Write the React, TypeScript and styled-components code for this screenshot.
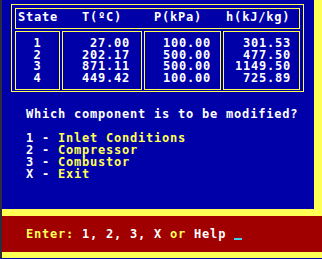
import React, { FunctionComponent } from "react";
import styled, { createGlobalStyle } from "styled-components";

const BLUE = "#0000a8";
const YELLOW = "#ffff55";
const WHITE = "#ffffff";
const RED = "#a00000";

type Row = {
  state: string;
  t: string;
  p: string;
  h: string;
};

const rows: Row[] = [
  { state: "1", t: "27.00", p: "100.00", h: "301.53" },
  { state: "2", t: "202.17", p: "500.00", h: "477.50" },
  { state: "3", t: "871.11", p: "500.00", h: "1149.50" },
  { state: "4", t: "449.42", p: "100.00", h: "725.89" },
];

const menu = [
  { key: "1", label: "Inlet Conditions" },
  { key: "2", label: "Compressor" },
  { key: "3", label: "Combustor" },
  { key: "X", label: "Exit" },
];

const App: FunctionComponent = () => {
  return (
    <>
      <GlobalStyle />
      <Screen>
        <Panel>
          <TableBox>
            <HeaderBox>{"State   T(ºC)    P(kPa)   h(kJ/kg)"}</HeaderBox>
            <Cells>
              <Cell align="center" pad={0}>
                {rows.map((r) => (
                  <div key={r.state}>{r.state}</div>
                ))}
              </Cell>
              <Cell align="right" pad={11}>
                {rows.map((r) => (
                  <div key={r.state}>{r.t}</div>
                ))}
              </Cell>
              <Cell align="right" pad={9}>
                {rows.map((r) => (
                  <div key={r.state}>{r.p}</div>
                ))}
              </Cell>
              <Cell align="right" pad={8}>
                {rows.map((r) => (
                  <div key={r.state}>{r.h}</div>
                ))}
              </Cell>
            </Cells>
          </TableBox>

          <Menu>
            <Line>Which component is to be modified?</Line>
            <Line>&nbsp;</Line>
            {menu.map((m) => (
              <Line key={m.key}>
                {m.key} - <Hi>{m.label}</Hi>
              </Line>
            ))}
          </Menu>
        </Panel>

        <Prompt>
          <Hi>Enter:</Hi> 1, 2, 3, X <Hi>or</Hi> Help <Cursor />
        </Prompt>
      </Screen>
    </>
  );
};

export default App;

const GlobalStyle = createGlobalStyle`
  html, body {
    margin: 0;
    padding: 0;
    background: ${YELLOW};
  }
`;

const Screen = styled.div`
  width: 322px;
  height: 259px;
  box-sizing: border-box;
  border-left: 2px solid #2c2c3c;
  border-bottom: 1px solid ${BLUE};
  background: ${YELLOW};
  display: flex;
  flex-direction: column;
  font-family: "DejaVu Sans Mono", monospace;
  font-weight: bold;
  font-size: 12px;
  letter-spacing: 0.78px;
  color: ${WHITE};
  overflow: hidden;
`;

const Panel = styled.div`
  width: 312px;
  height: 209px;
  flex: none;
  background: ${BLUE};
  display: flex;
  flex-direction: column;
`;

const TableBox = styled.div`
  margin: 4px 0 0 9px;
  width: 293px;
  box-sizing: border-box;
  border: 1px solid ${YELLOW};
  padding: 3px 3px 1px 3px;
  display: flex;
  flex-direction: column;
  gap: 2px;
`;

const HeaderBox = styled.div`
  height: 21px;
  box-sizing: border-box;
  border: 1px solid ${YELLOW};
  padding: 0 0 1px 2px;
  line-height: 17px;
  white-space: pre;
`;

const Cells = styled.div`
  display: grid;
  grid-template-columns: 45px 80px 77px 77px;
  gap: 2px;
`;

const Cell = styled.div<{ align: "center" | "right"; pad: number }>`
  height: 59px;
  box-sizing: border-box;
  border: 1px solid ${YELLOW};
  padding: 6px ${(p) => p.pad}px 0 0;
  line-height: 11.5px;
  text-align: ${(p) => p.align};
  white-space: pre;
`;

const Menu = styled.div`
  margin-top: 16px;
  padding-left: 24px;
  line-height: 12px;
`;

const Line = styled.div`
  white-space: pre;
`;

const Hi = styled.span`
  color: ${YELLOW};
`;

const Prompt = styled.div`
  margin-top: 7px;
  height: 36px;
  flex: none;
  background: ${RED};
  padding-left: 24px;
  line-height: 36px;
  white-space: pre;
`;

const Cursor = styled.span`
  display: inline-block;
  width: 8px;
  height: 2px;
  background: #40d0f0;
  vertical-align: -2px;
`;
